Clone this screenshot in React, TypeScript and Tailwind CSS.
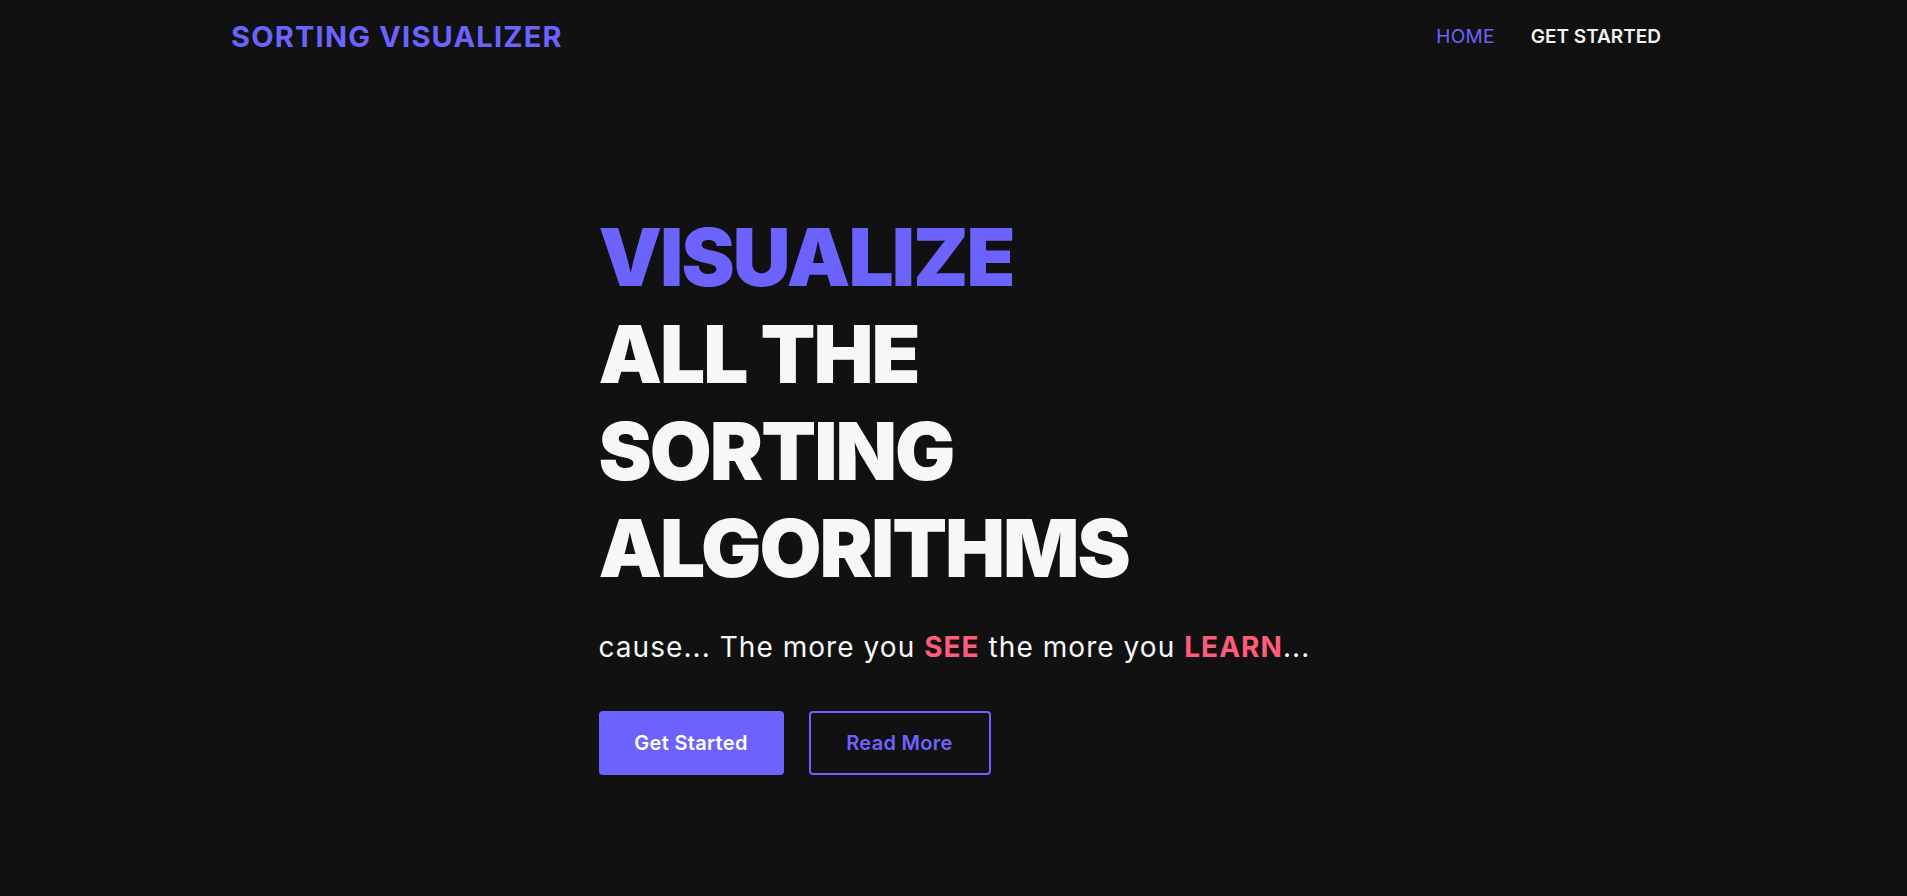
import { useState } from "react";

const links = ["HOME", "GET STARTED"];

export default function App() {
    const [active, setActive] = useState("HOME");

    return (
        <div className="min-h-[896px] bg-[#111111] font-['Inter','Liberation_Sans',sans-serif] text-[#f7f7f7]">
            <header className="mx-auto flex h-[74px] max-w-[1445px] items-center justify-between">
                <a href="#" className="text-[29px] font-bold tracking-[1.2px] text-[#6c63ff]">
                    SORTING VISUALIZER
                </a>
                <nav className="flex items-center gap-[6px]">
                    {links.map((link) => (
                        <a
                            key={link}
                            href="#"
                            onClick={() => setActive(link)}
                            className={
                                link === active
                                    ? "px-[15px] text-[19px] font-normal tracking-[0.3px] text-[#6c63ff]"
                                    : "px-[15px] text-[19px] font-semibold text-[#f2f2f2]"
                            }
                        >
                            {link}
                        </a>
                    ))}
                </nav>
            </header>

            <section className="mx-auto w-[710px] pt-[134px]">
                <h1 className="text-[80px] font-black leading-[97px] tracking-[-2px]">
                    <span className="block text-[#6c63ff]">VISUALIZE</span>
                    <span className="block">ALL THE</span>
                    <span className="block">SORTING</span>
                    <span className="block">ALGORITHMS</span>
                </h1>
                <p className="mt-[33px] whitespace-nowrap text-[28px] font-normal leading-[36px] tracking-[1.05px]">
                    cause... The more you <span className="font-bold text-[#ff5c7c]">SEE</span> the more you{" "}
                    <span className="font-bold text-[#ff5c7c]">LEARN</span>...
                </p>
                <div className="mt-[46px] flex gap-[25px]">
                    <button className="h-[64px] w-[185px] rounded-[4px] bg-[#6c63ff] text-[20px] font-semibold tracking-[0.3px] text-white">
                        Get Started
                    </button>
                    <button className="h-[64px] w-[182px] rounded-[4px] border-2 border-[#6c63ff] text-[20px] font-semibold tracking-[0.3px] text-[#6c63ff]">
                        Read More
                    </button>
                </div>
            </section>
        </div>
    );
}
